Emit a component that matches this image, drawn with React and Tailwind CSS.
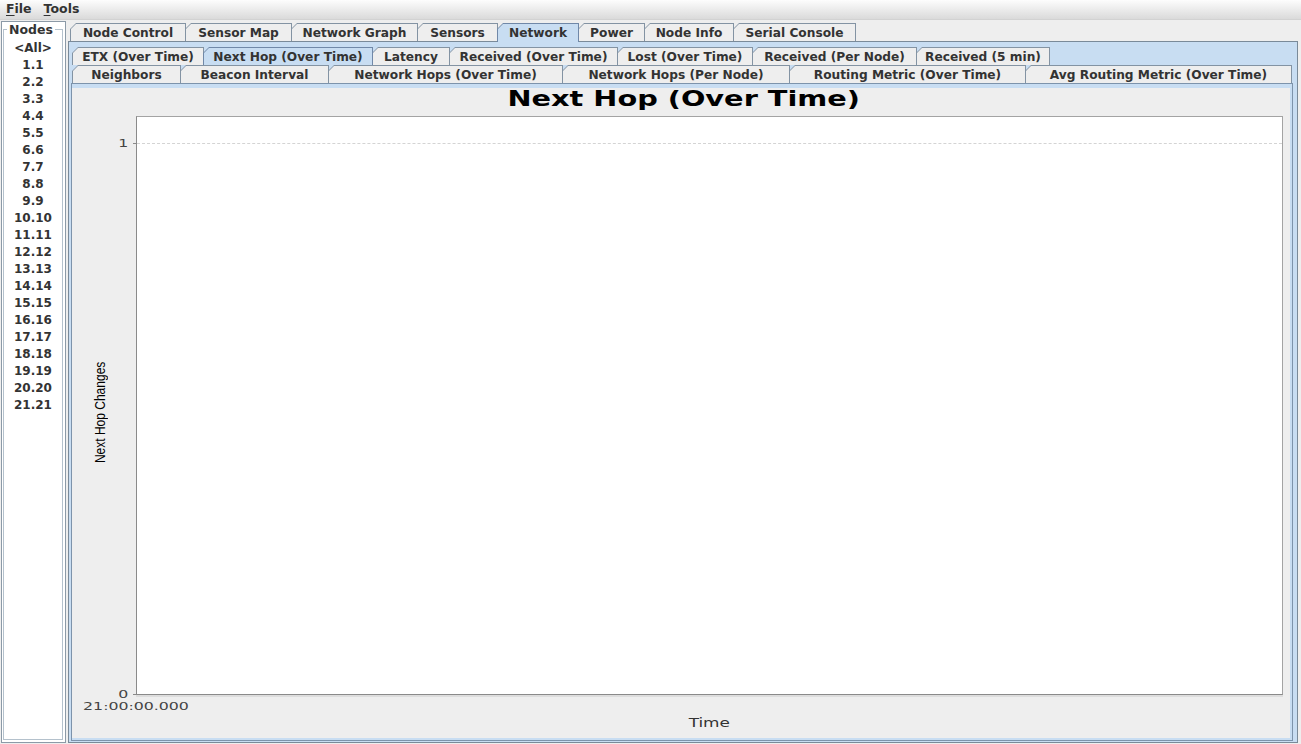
const topTabs = [
  { label: 'Node Control', width: 'w-[116px]' },
  { label: 'Sensor Map', width: 'w-[107px]' },
  { label: 'Network Graph', width: 'w-[127px]' },
  { label: 'Sensors', width: 'w-[81px]' },
  { label: 'Network', width: 'w-[82px]', selected: true },
  { label: 'Power', width: 'w-[67px]' },
  { label: 'Node Info', width: 'w-[90px]' },
  { label: 'Serial Console', width: 'w-[123px]' },
];

const graphTabsTop = [
  { label: 'ETX (Over Time)', width: 'w-[132px]' },
  { label: 'Next Hop (Over Time)', width: 'w-[170px]', selected: true },
  { label: 'Latency', width: 'w-[78px]' },
  { label: 'Received (Over Time)', width: 'w-[169px]' },
  { label: 'Lost (Over Time)', width: 'w-[136px]' },
  { label: 'Received (Per Node)', width: 'w-[165px]' },
  { label: 'Received (5 min)', width: 'w-[134px]' },
];

const graphTabsBottom = [
  { label: 'Neighbors', width: 'w-[109px]' },
  { label: 'Beacon Interval', width: 'w-[149px]' },
  { label: 'Network Hops (Over Time)', width: 'w-[235px]' },
  { label: 'Network Hops (Per Node)', width: 'w-[228px]' },
  { label: 'Routing Metric (Over Time)', width: 'w-[237px]' },
  { label: 'Avg Routing Metric (Over Time)', width: 'w-[267px]' },
];

const nodes = ['<All>'];
for (let i = 1; i <= 21; i++) nodes.push(`${i}.${i}`);

function Tab({ label, width, selected, first, tall }) {
  return (
    <div
      className={`${width} ${first ? '' : '-ml-px'} ${
        selected ? 'relative z-10 bg-[#7088a8]' : 'bg-[#8393a3]'
      } ${tall ? 'h-[19px]' : 'h-[18px]'} flex shrink-0 px-px pt-px [clip-path:polygon(6px_0,100%_0,100%_100%,0_100%,0_6px)]`}
    >
      <div
        className={`flex flex-1 items-center justify-center pt-[2px] ${tall ? 'pb-px' : ''} ${
          selected ? 'bg-[#c8ddf2]' : 'bg-[#eeeeee]'
        } text-[12.2px] font-bold leading-none text-[#333333] [clip-path:polygon(5px_0,100%_0,100%_100%,0_100%,0_5px)]`}
      >
        {label}
      </div>
    </div>
  );
}

function TabRow({ tabs, tallSelected, className = '' }) {
  return (
    <div className={`flex items-start ${className}`}>
      {tabs.map((tab, i) => (
        <Tab key={tab.label} {...tab} first={i === 0} tall={tallSelected && tab.selected} />
      ))}
    </div>
  );
}

function Chart() {
  return (
    <div className="flex flex-1 flex-col bg-[#eeeeee]">
      <div className="h-[28px] pl-[5px] pt-px text-center text-[21px] font-bold leading-[21px] text-black">
        <span className="inline-block scale-x-[1.37]">Next Hop (Over Time)</span>
      </div>

      <div className="flex h-[579px]">
        <div className="flex w-[64px] shrink-0 items-center pl-[20px] pt-[14px]">
          <span className="rotate-180 scale-y-[0.8] font-['Liberation_Sans',sans-serif] text-[15px] leading-[16px] text-black [writing-mode:vertical-rl]">
            Next Hop Changes
          </span>
        </div>

        <div className="relative flex-1 border border-[#a3a3a3] border-l-[#8a8a8a] border-b-[#8a8a8a] bg-white shadow-[0_2px_0_#dddddd]">
          <div className="absolute left-0 right-0 top-[26px] border-t border-dashed border-[#d4d4d4]" />
          <div className="absolute right-full top-[26px] h-px w-[4px] bg-[#8a8a8a]" />
          <span className="absolute right-full top-[26px] mr-[10px] -translate-y-1/2 scale-x-150 text-[10.5px] leading-[12px] text-[#444444]">
            1
          </span>
          <div className="absolute right-full top-[577px] h-px w-[4px] bg-[#8a8a8a]" />
          <span className="absolute right-full top-[577px] mr-[10px] -translate-y-1/2 scale-x-150 text-[10.5px] leading-[12px] text-[#444444]">
            0
          </span>
        </div>

        <div className="w-[7px] shrink-0" />
      </div>

      <div className="flex h-[41px]">
        <div className="w-[64px] shrink-0" />
        <div className="relative flex flex-1 flex-col items-center">
          <span className="absolute left-0 top-[5px] -translate-x-1/2 scale-x-150 whitespace-nowrap text-[10.5px] leading-[12px] text-[#444444]">
            21:00:00.000
          </span>
          <span className="mt-[21px] inline-block scale-x-[1.35] text-[12.5px] leading-[14px] text-[#333333]">
            Time
          </span>
        </div>
        <div className="w-[7px] shrink-0" />
      </div>
    </div>
  );
}

export default function App() {
  return (
    <div className="flex h-[744px] w-[1301px] flex-col overflow-hidden bg-[#eeeeee] font-['DejaVu_Sans',sans-serif]">
      <div className="flex h-[20px] shrink-0 items-center gap-[12px] border-b border-[#d2d2d2] bg-linear-to-b from-[#fdfdfd] to-[#dadada] pb-px pl-[6px] text-[12.5px] font-bold leading-none text-[#333333]">
        <span>
          <span className="underline underline-offset-[2px]">F</span>ile
        </span>
        <span>
          <span className="underline underline-offset-[2px]">T</span>ools
        </span>
      </div>

      <div className="flex min-h-0 flex-1 py-px">
        <div className="ml-px flex w-[65px] shrink-0 flex-col border border-[#8c9aa7] bg-white">
          <fieldset className="mb-[2px] ml-px mr-[2px] min-h-0 flex-1 border border-[#b4c1cc]">
            <legend className="ml-[3px] px-[2px] text-[12.5px] font-bold leading-[15px] text-[#333333]">
              Nodes
            </legend>
            <div className="flex flex-col pt-[3px]">
              {nodes.map((node) => (
                <div key={node} className="h-[17px] text-center text-[12px] font-bold leading-[17px] text-[#333333]">
                  {node}
                </div>
              ))}
            </div>
          </fieldset>
        </div>

        <div className="ml-[2px] mr-[3px] flex min-w-0 flex-1 flex-col pt-[2px]">
          <TabRow tabs={topTabs} tallSelected className="relative z-10 h-[18px] pl-[2px]" />

          <div className="flex min-h-0 flex-1 flex-col border border-[#7a8a99] bg-[#c8ddf2] pb-px pl-[2px] pr-[4px] pt-[5px]">
            <TabRow tabs={graphTabsTop} className="h-[18px] pl-px" />
            <TabRow tabs={graphTabsBottom} className="h-[18px] pl-px" />

            <div className="flex min-h-0 flex-1 flex-col border border-[#7d93ab] bg-[#c8ddf2] pb-[2px] pr-[2px] pt-[4px]">
              <Chart />
            </div>
          </div>
        </div>
      </div>
    </div>
  );
}
